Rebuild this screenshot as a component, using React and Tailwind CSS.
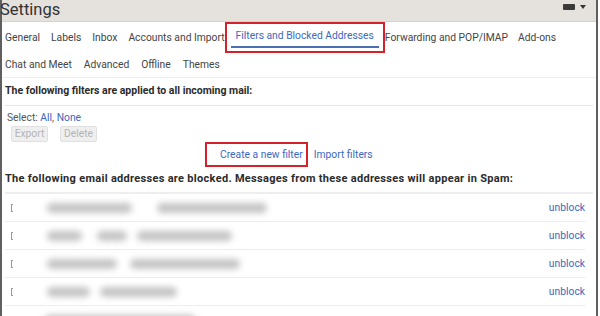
import React from "react";

const tabsTop = ["General", "Labels", "Inbox", "Accounts and Import"];
const tabsTopAfter = ["Forwarding and POP/IMAP", "Add-ons"];
const tabsBottom = ["Chat and Meet", "Advanced", "Offline", "Themes"];

// blurred addresses: [width, gap before]
const blocked = [
  [[85, 0], [110, 25]],
  [[35, 0], [30, 15], [95, 10]],
  [[70, 0], [110, 13]],
  [[43, 0], [77, 10]],
];

function Blob({ w, gap }) {
  return (
    <div
      className="h-[10px] rounded-full bg-[#c4c4c4] blur-[3px]"
      style={{ width: w, marginLeft: gap }}
    />
  );
}

export default function App() {
  return (
    <div
      className="w-[600px] h-[316px] overflow-hidden bg-white text-[#444] text-[10.3px] whitespace-nowrap"
      style={{ fontFamily: "Roboto, 'Liberation Sans', sans-serif" }}
    >
      <div className="w-[598px] h-full border-l-2 border-r-2 border-[#5f5f5f] flex flex-col">
        {/* header */}
        <div className="h-[22px] shrink-0 bg-[#e5e1dd] border-b border-[#d6d2ce] flex items-center justify-between">
          <span className="text-[16.5px] leading-[20px] text-[#333] -ml-[2px] -mt-[1px]">Settings</span>
          <div className="flex items-center gap-[5px] mr-[10px] -mt-[8px]">
            <div className="w-[12px] h-[6px] rounded-[1px] bg-[#3a3a3a]" />
            <div className="w-0 h-0 border-l-[3px] border-r-[3px] border-t-[4px] border-l-transparent border-r-transparent border-t-[#333]" />
          </div>
        </div>

        {/* tabs */}
        <div className="flex h-[31px] shrink-0 items-stretch pl-[3px]">
          <div className="flex items-center gap-[11px]">
            {tabsTop.map((t) => (
              <span key={t}>{t}</span>
            ))}
          </div>
          <div className="border-2 border-[#d3222a] px-[4px] flex">
            <div className="px-[5px] flex items-center border-b-2 border-[#4a6fb5] mb-[3px] text-[#3d68c0] pt-[1px]">
              Filters and Blocked Addresses
            </div>
          </div>
          <div className="flex items-center gap-[10px]">
            {tabsTopAfter.map((t) => (
              <span key={t}>{t}</span>
            ))}
          </div>
        </div>
        <div className="flex h-[25px] shrink-0 items-center gap-[12px] pl-[3px] border-b border-[#eeeeee]">
          {tabsBottom.map((t) => (
            <span key={t}>{t}</span>
          ))}
        </div>

        {/* filters */}
        <div className="px-[3px]">
          <div className="h-[28px] flex items-center pb-[1px] text-[10.5px] font-bold text-[#2b2b2b] border-b border-[#e6e6e6]">
            The following filters are applied to all incoming mail:
          </div>
          <div className="pl-[2px] pt-[5px] leading-[14px] text-[#555]">
            Select: <span className="text-[#3d68c0]">All</span>, <span className="text-[#3d68c0]">None</span>
          </div>
          <div className="flex gap-[12px] pl-[6px] mt-[1px]">
            <div className="w-[37px] h-[16px] flex items-center justify-center rounded-[2px] bg-[#efefef] border border-[#e0e0e0] text-[#b4b4b4]">
              Export
            </div>
            <div className="w-[37px] h-[16px] flex items-center justify-center rounded-[2px] bg-[#efefef] border border-[#e0e0e0] text-[#b4b4b4]">
              Delete
            </div>
          </div>
          <div className="flex items-center h-[25px] pl-[200px]">
            <div className="h-full border-2 border-[#d3222a] flex items-center pl-[13px] pr-[3px] text-[#3d68c0]">
              Create a new filter
            </div>
            <span className="ml-[6px] text-[#3d68c0]">Import filters</span>
          </div>
          <div className="h-[27px] flex items-center text-[11px] tracking-[0.3px] font-bold text-[#2b2b2b] border-b-2 border-[#eeeeee]">
            The following email addresses are blocked. Messages from these addresses will appear in Spam:
          </div>
          {blocked.map((row, i) => (
            <div key={i} className="h-[28px] flex items-center border-b border-[#ececec] mr-[8px] pl-[6px]">
              <div className="w-[2px] h-[8px] border-l border-t border-b border-[#999] rounded-l-[1px]" />
              <div className="flex ml-[34px]">
                {row.map(([w, g], j) => (
                  <Blob key={j} w={w} gap={g} />
                ))}
              </div>
              <span className="ml-auto text-[#3d68c0]">unblock</span>
            </div>
          ))}
          <div className="h-[28px] flex items-center pl-[40px]">
            <Blob w={150} gap={0} />
          </div>
        </div>
      </div>
    </div>
  );
}
